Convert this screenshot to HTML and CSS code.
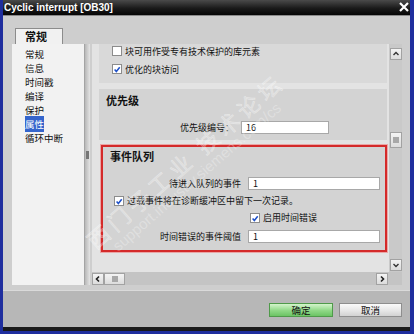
FILE: index.html
```html
<!DOCTYPE html>
<html lang="zh">
<head>
    <meta charset="UTF-8">
    <title>Cyclic interrupt [OB30]</title>
    <link rel="stylesheet" href="styles.css">
</head>
<body>
    <div class="window">
        <div class="titlebar">
            <span class="title">Cyclic interrupt [OB30]</span>
            <svg class="close" width="10" height="10" viewBox="0 0 10 10">
                <path d="M1 1 L9 9 M9 1 L1 9" stroke="#fff" stroke-width="2.2"/>
            </svg>
        </div>

        <div class="body">
            <div class="tabs">
                <div class="tab">常规</div>
            </div>

            <div class="main">
                <div class="nav">
                    <ul class="nav-list">
                        <li>常规</li>
                        <li>信息</li>
                        <li>时间戳</li>
                        <li>编译</li>
                        <li>保护</li>
                        <li><span class="selected">属性</span></li>
                        <li>循环中断</li>
                    </ul>
                    <div class="nav-scroll"><div class="nav-thumb"></div></div>
                </div>

                <div class="content">
                    <div class="view">
                        <div class="pane">
                            <div class="section sec-top">
                                <div class="check-row">
                                    <span class="cb"></span>
                                    <span>块可用作受专有技术保护的库元素</span>
                                </div>
                                <div class="check-row">
                                    <span class="cb"><svg viewBox="0 0 10 10"><path d="M2 5 L4.2 7.6 L8.4 2.2" fill="none" stroke="#1e50c8" stroke-width="1.9"/></svg></span>
                                    <span>优化的块访问</span>
                                </div>
                            </div>

                            <div class="section sec-priority">
                                <h2>优先级</h2>
                                <div class="field-row">
                                    <label class="label">优先级编号：</label>
                                    <div class="input short">16</div>
                                </div>
                            </div>

                            <div class="section sec-events">
                                <h2>事件队列</h2>
                                <div class="field-row">
                                    <label class="label">待进入队列的事件</label>
                                    <div class="input">1</div>
                                </div>
                                <div class="check-row overload">
                                    <span class="cb"><svg viewBox="0 0 10 10"><path d="M2 5 L4.2 7.6 L8.4 2.2" fill="none" stroke="#1e50c8" stroke-width="1.9"/></svg></span>
                                    <span>过载事件将在诊断缓冲区中留下一次记录。</span>
                                </div>
                                <div class="check-row time-error">
                                    <span class="cb"><svg viewBox="0 0 10 10"><path d="M2 5 L4.2 7.6 L8.4 2.2" fill="none" stroke="#1e50c8" stroke-width="1.9"/></svg></span>
                                    <span>启用时间错误</span>
                                </div>
                                <div class="field-row last">
                                    <label class="label">时间错误的事件阈值</label>
                                    <div class="input">1</div>
                                </div>
                            </div>
                        </div>

                        <div class="vscroll">
                            <div class="sbtn up"><svg viewBox="0 0 10 10"><path d="M2.5 6 L5 3.5 L7.5 6" fill="none" stroke="#333" stroke-width="1.4"/></svg></div>
                            <div class="sbtn thumb"><span class="grip"></span></div>
                            <div class="spacer"></div>
                            <div class="sbtn down"><svg viewBox="0 0 10 10"><path d="M2.5 4 L5 6.5 L7.5 4" fill="none" stroke="#333" stroke-width="1.4"/></svg></div>
                        </div>
                    </div>

                    <div class="hscroll">
                        <div class="sbtn left"><svg viewBox="0 0 10 10"><path d="M6 2.5 L3.5 5 L6 7.5" fill="none" stroke="#222" stroke-width="1.6"/></svg></div>
                        <div class="sbtn hthumb"><span class="grip"></span></div>
                        <div class="spacer"></div>
                        <div class="sbtn right"><svg viewBox="0 0 10 10"><path d="M4 2.5 L6.5 5 L4 7.5" fill="none" stroke="#222" stroke-width="1.6"/></svg></div>
                        <div class="corner"></div>
                    </div>
                </div>
            </div>

            <div class="footer">
                <button class="btn ok">确定</button>
                <button class="btn cancel">取消</button>
            </div>
        </div>

        <!-- forum watermark over the dialog -->
        <div class="watermark">
            <div class="wm-cn">西门子工业 技术论坛</div>
            <div class="wm-url">support.industry.siemens.com/cs</div>
        </div>
    </div>
</body>
</html>
```

FILE: styles.css
```css
* {
    margin: 0;
    padding: 0;
    box-sizing: border-box;
}

body {
    background: #1f2e9e;
    font-family: "Noto Sans CJK SC", "Liberation Sans", sans-serif;
    color: #111;
}

.window {
    position: relative;
    width: 414px;
    height: 334px;
    border: solid #1f2e9e;
    border-width: 0 4px 3px 3px;
    overflow: hidden;
}

.titlebar {
    height: 16px;
    background: linear-gradient(#4a4a4a, #1a1a1a 55%, #050505);
    border-bottom: 1px solid #8a8a8a;
    display: flex;
    align-items: center;
    justify-content: space-between;
    padding: 0 1px 0 1px;
}

.title {
    font: bold 10px "Liberation Sans", Arial, sans-serif;
    color: #fff;
}

.close {
    display: block;
    margin-top: -1px;
}

.body {
    height: 315px;
    background: #cecece;
    border-bottom: 4px solid #1a1a1a;
    display: flex;
    flex-direction: column;
}

/* tab strip */
.tabs {
    height: 28px;
    padding: 12px 0 0 12px;
}

.tab {
    width: 48px;
    height: 16px;
    background: #f1f1f1;
    border: 1px solid #8c8c8c;
    border-bottom: none;
    font-size: 11px;
    font-weight: bold;
    line-height: 15px;
    padding-left: 9px;
}

.main {
    height: 241px;
    display: flex;
    padding-left: 9px;
    gap: 2px;
}

/* left navigation */
.nav {
    width: 78px;
    display: flex;
}

.nav-list {
    width: 72px;
    background: #f2f2f2;
    list-style: none;
    padding-top: 3px;
}

.nav-list li {
    font-size: 9.5px;
    line-height: 14px;
    padding-left: 13px;
}

.selected {
    background: #3565cc;
    color: #fff;
    padding: 1px 0;
}

.nav-scroll {
    width: 6px;
    background: linear-gradient(90deg, #b8b8b8, #e4e4e4);
    border-left: 1px solid #a4a4a4;
    padding-top: 107px;
}

.nav-thumb {
    height: 8px;
    background: #777;
    margin: 0 1px;
}

/* property pane */
.content {
    width: 310px;
    display: flex;
    flex-direction: column;
}

.view {
    height: 228px;
    display: flex;
}

.pane {
    width: 297px;
    background: #e3e3e3;
    padding: 0 2px 0 7px;
    overflow: hidden;
}

.section {
    background: #d3d3d3;
    font-size: 9px;
}

.section h2 {
    font-size: 11px;
    font-weight: bold;
    line-height: 14px;
}

.sec-top {
    background: #d9d9d9;
    margin-top: -2px;
    height: 41px;
    padding-left: 13px;
    margin-bottom: 6px;
}

.check-row {
    height: 18px;
    display: flex;
    align-items: center;
    gap: 3px;
}

.cb {
    width: 10px;
    height: 10px;
    background: #fff;
    border: 1px solid #8c8c8c;
    display: flex;
}

.cb svg {
    width: 9px;
    height: 9px;
}

.sec-priority {
    height: 51px;
    padding: 4px 0 0 7px;
    margin-bottom: 5px;
}

.field-row {
    display: flex;
    align-items: center;
    height: 17px;
}

.label {
    text-align: right;
    padding-right: 7px;
}

.input {
    height: 13px;
    background: #fff;
    border: 1px solid #a8a8a8;
    line-height: 11px;
    padding-left: 4px;
    width: 132px;
}

.input.short {
    width: 88px;
}

.sec-priority .field-row {
    margin-top: 12px;
}

.sec-priority .label {
    width: 142px;
    margin-left: -7px;
}

.sec-events {
    height: 107px;
    margin-left: 2px;
    border: 2px solid #d42a2a;
    box-shadow: 0 0 0 1px #eaa6a6;
    padding-top: 2px;
}

.sec-events h2 {
    padding-left: 7px;
}

.sec-events .field-row:first-of-type {
    margin-top: 12px;
}

.sec-events .label {
    width: 145px;
}

.sec-events .check-row {
    height: 17px;
}

.overload {
    padding-left: 11px;
}

.time-error {
    padding-left: 147px;
}

.sec-events .last {
    margin-top: 2px;
}

/* scrollbars */
.vscroll {
    width: 13px;
    background: #c9c9c9;
    display: flex;
    flex-direction: column;
    align-items: center;
    padding-bottom: 1px;
}

.sbtn {
    width: 12px;
    height: 12px;
    background: linear-gradient(#f4f4f4, #dcdcdc);
    border: 1px solid #a2a2a2;
    display: flex;
    align-items: center;
    justify-content: center;
}

.sbtn svg {
    width: 10px;
    height: 10px;
}

.vscroll .up {
    margin-top: 4px;
}

.vscroll .thumb {
    margin-top: 72px;
    height: 16px;
}

.grip {
    width: 6px;
    height: 6px;
    background: #a8a8a8;
}

.spacer {
    flex: 1;
}

.hscroll {
    height: 13px;
    display: flex;
    align-items: center;
    background: #c4c4c4;
}

.hscroll .hthumb {
    width: 21px;
}

.corner {
    width: 14px;
}

/* dialog buttons */
.footer {
    height: 37px;
    margin-top: 5px;
    background: #b7b7b7;
    border-top: 1px solid #dadada;
    display: flex;
    justify-content: flex-end;
    align-items: flex-start;
    gap: 6px;
    padding: 12px 8px 0 0;
}

.btn {
    height: 14px;
    font-family: "Noto Sans CJK SC", sans-serif;
    font-size: 9.5px;
    line-height: 12px;
    color: #111;
}

.ok {
    width: 64px;
    background: linear-gradient(#d4f5cc, #8fd886 55%, #6cc464);
    border: 1px solid #4f9a4a;
}

.cancel {
    width: 63px;
    background: linear-gradient(#fafafa, #e6e6e6 55%, #d2d2d2);
    border: 1px solid #8e8e8e;
}

/* watermark */
.watermark {
    position: absolute;
    left: 94px;
    top: 252px;
    transform: rotate(-41deg);
    transform-origin: 0 0;
    pointer-events: none;
    white-space: nowrap;
}

.wm-cn {
    font-size: 22px;
    letter-spacing: 5px;
    line-height: 24px;
    margin-top: -24px;
    color: rgba(255, 255, 255, 0.22);
    -webkit-text-stroke: 0.5px rgba(255, 255, 255, 0.45);
}

.wm-url {
    font: 15px "Liberation Sans", sans-serif;
    line-height: 18px;
    padding-left: 16px;
    color: rgba(255, 255, 255, 0.28);
}
```
